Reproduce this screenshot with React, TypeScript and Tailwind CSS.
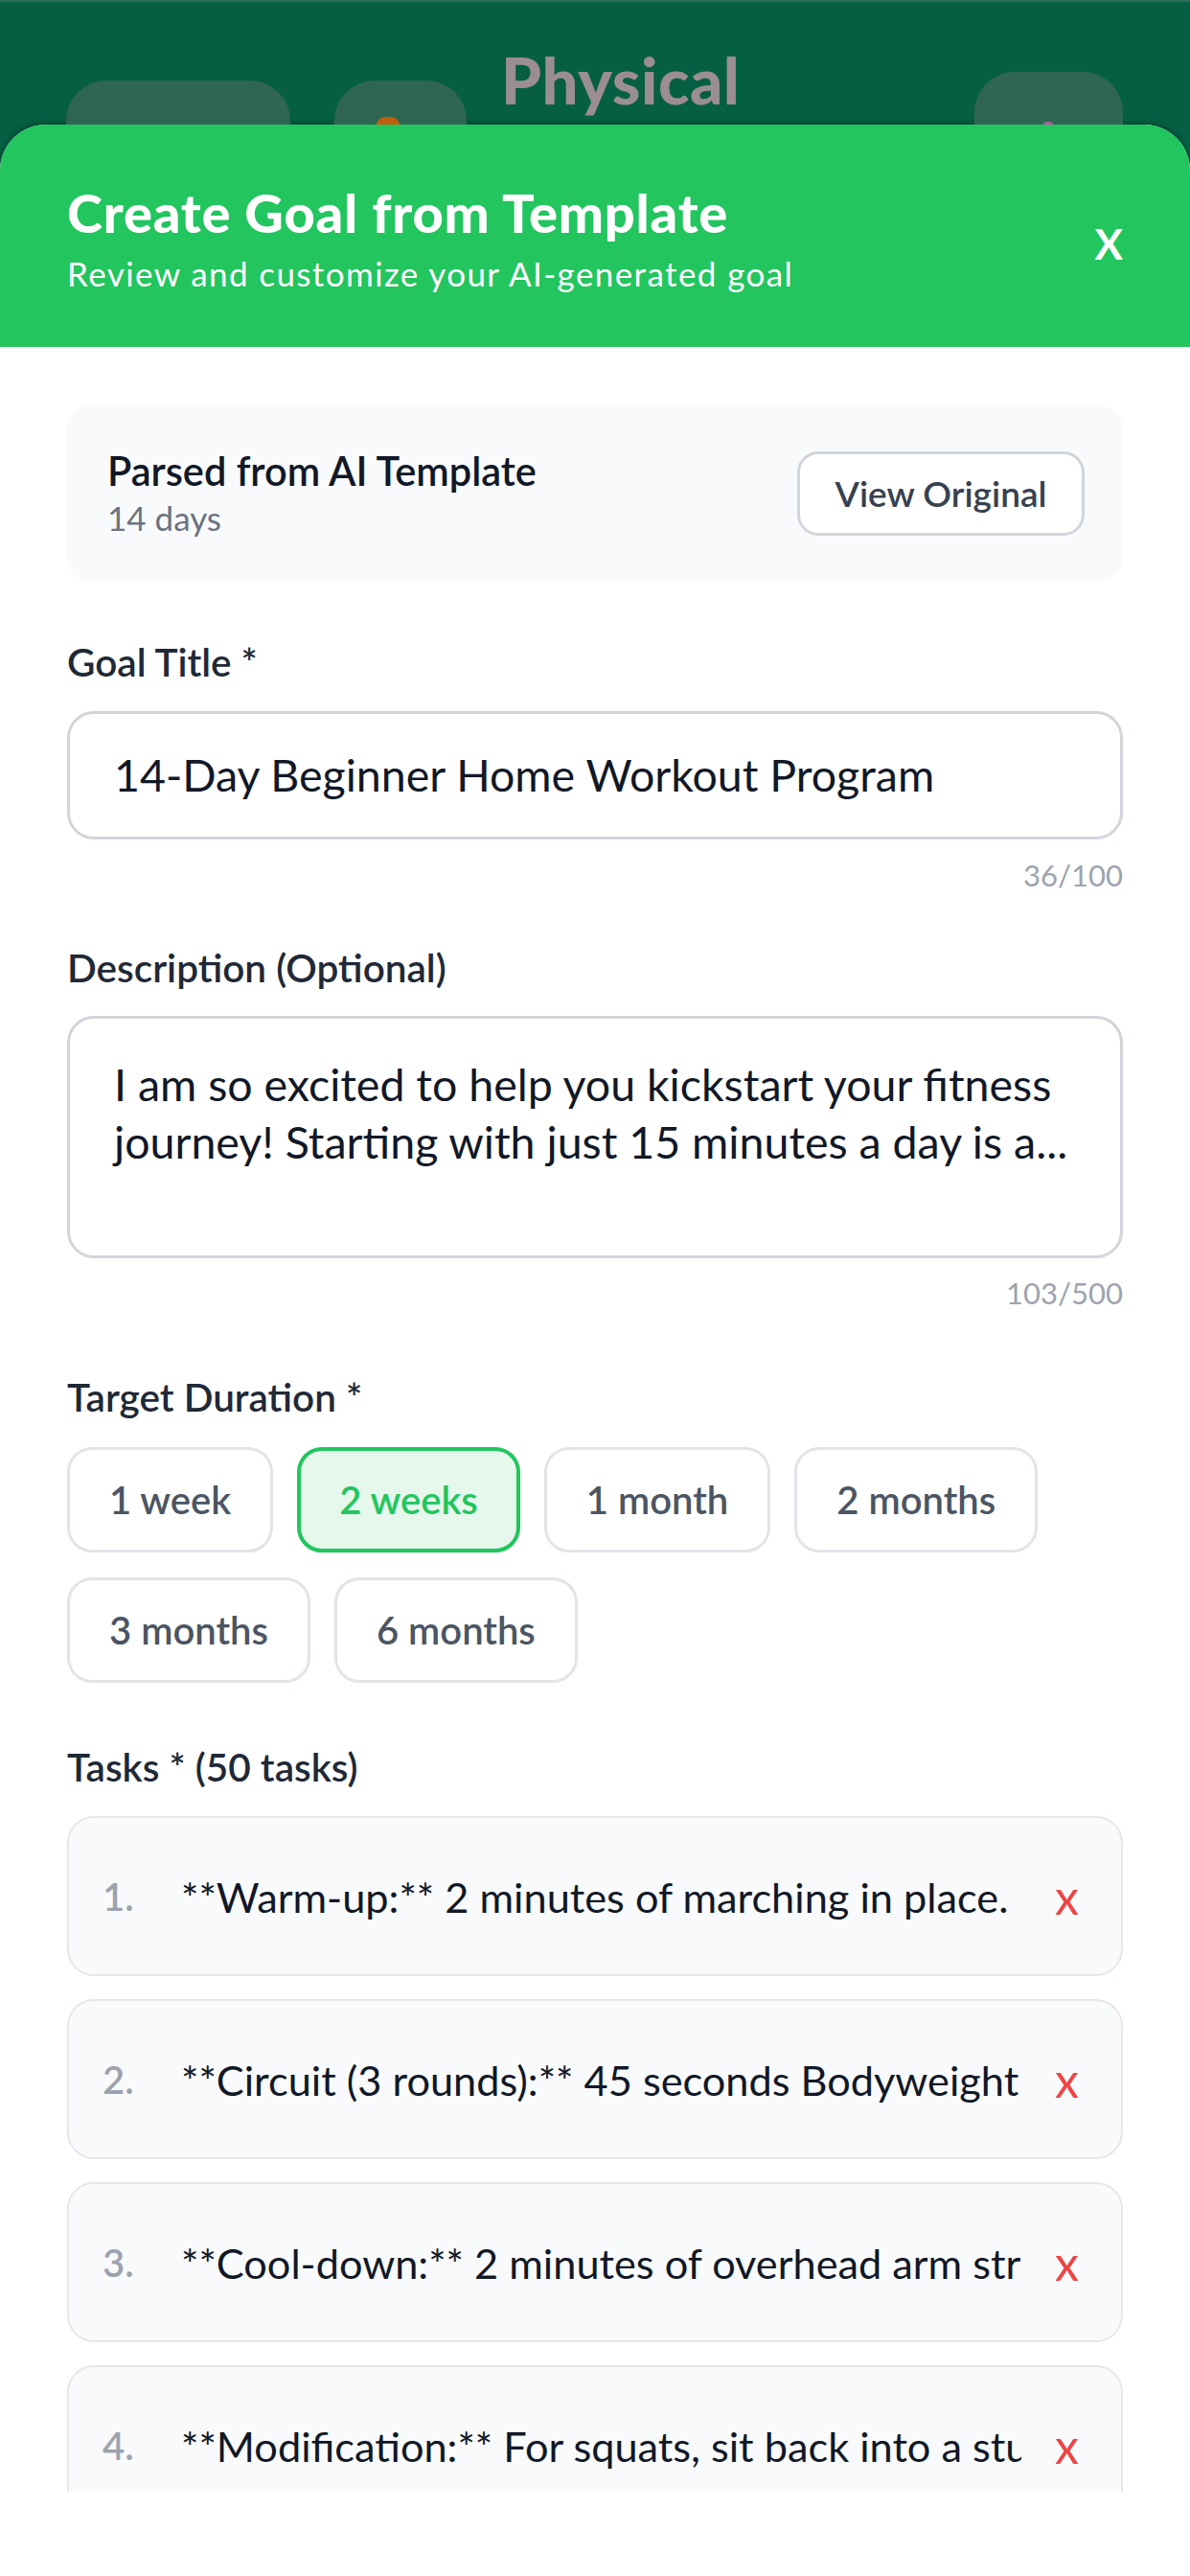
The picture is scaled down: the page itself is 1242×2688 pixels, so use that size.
import React from "react";

const durations = ["1 week", "2 weeks", "1 month", "2 months", "3 months", "6 months"];

const tasks = [
  "**Warm-up:** 2 minutes of marching in place.",
  "**Circuit (3 rounds):** 45 seconds Bodyweight Squats, 15 seconds rest",
  "**Cool-down:** 2 minutes of overhead arm stretches and shoulder rolls",
  "**Modification:** For squats, sit back into a sturdy chair and stand up",
];

function FieldLabel({ children, className = "" }: { children: React.ReactNode; className?: string }) {
  return (
    <div className={`text-[40.5px] leading-[48px] font-semibold text-[#1f2937] ${className}`}>{children}</div>
  );
}

function Counter({ children, className = "" }: { children: React.ReactNode; className?: string }) {
  return <div className={`text-right text-[31px] leading-[40px] text-[#9ca3af] ${className}`}>{children}</div>;
}

export default function App() {
  const selected = "2 weeks";
  return (
    <div className="min-h-screen w-[1242px] bg-[#065f42] font-['Lato',sans-serif]">
      {/* screen underneath the sheet */}
      <div className="flex h-[130px] items-start overflow-hidden border-t-2 border-[#2c6c56]">
        <div className="ml-[69px] mt-[82px] h-[120px] w-[234px] shrink-0 rounded-[42px] bg-[#2f6652]" />
        <div className="ml-[46px] mt-[82px] flex h-[120px] w-[138px] shrink-0 rounded-[42px] bg-[#2f6652]">
          <div className="ml-[43px] mt-[38px] h-[22px] w-[26px] rounded-full bg-[#c0600c]" />
        </div>
        <div className="ml-[36px] mt-[48px] text-[67px] leading-[66px] font-black tracking-[0.6px] text-[#9b8e93]">
          Physical
        </div>
        <div className="ml-auto mr-[70px] mt-[73px] flex h-[120px] w-[155px] shrink-0 rounded-[42px] bg-[#2f6652]">
          <div className="ml-[71px] mt-[52px] h-[10px] w-[12px] rounded-full bg-[#b05aa0]" />
        </div>
      </div>

      {/* modal sheet */}
      <div className="overflow-hidden rounded-t-[48px] bg-white shadow-[0_-2px_5px_rgba(0,0,0,0.3)]">
        <div className="flex h-[232px] items-start justify-between bg-[#22c55e] px-[70px] pt-[60px]">
          <div className="flex flex-col">
            <div className="text-[56px] leading-[64px] font-black tracking-[0.8px] text-white">
              Create Goal from Template
            </div>
            <div className="mt-[9px] text-[35px] leading-[44px] tracking-[1.4px] text-white">
              Review and customize your AI-generated goal
            </div>
          </div>
          <button className="mt-[42px] text-[44px] leading-[44px] font-bold text-white">X</button>
        </div>

        <div className="h-[2238px] overflow-hidden px-[70px] pt-[61px]">
          {/* template source card */}
          <div className="flex h-[183px] items-center justify-between rounded-[24px] bg-[#f9fafb] pl-[42px] pr-[40px]">
            <div className="flex flex-col">
              <div className="text-[41.5px] leading-[48px] font-semibold text-[#111827]">Parsed from AI Template</div>
              <div className="mt-[3px] text-[35px] leading-[44px] text-[#6b7280]">14 days</div>
            </div>
            <button className="flex h-[88px] w-[300px] items-center justify-center rounded-[22px] border-[3px] border-[#d1d5db] bg-white text-[37px] font-semibold text-[#374151]">
              View Original
            </button>
          </div>

          {/* title */}
          <FieldLabel className="mt-[61px]">Goal Title *</FieldLabel>
          <div className="mt-[27px] flex h-[134px] items-center rounded-[28px] border-[3px] border-[#d1d5db] bg-white pl-[46px] text-[46.5px] text-[#111827]">
            14-Day Beginner Home Workout Program
          </div>
          <Counter className="mt-[17px]">36/100</Counter>

          {/* description */}
          <FieldLabel className="mt-[53px]">Description (Optional)</FieldLabel>
          <div className="mt-[26px] h-[253px] rounded-[28px] border-[3px] border-[#d1d5db] bg-white px-[46px] pt-[38px] text-[46.5px] leading-[60px] text-[#111827]">
            <div className="whitespace-nowrap">I am so excited to help you kickstart your fitness</div>
            <div className="whitespace-nowrap">journey! Starting with just 15 minutes a day is a...</div>
          </div>
          <Counter className="mt-[16px]">103/500</Counter>

          {/* duration */}
          <FieldLabel className="mt-[65px]">Target Duration *</FieldLabel>
          <div className="mt-[28px] flex flex-wrap gap-x-[25px] gap-y-[26px]">
            {durations.map((d) =>
              d === selected ? (
                <div
                  key={d}
                  className="flex h-[110px] items-center rounded-[26px] border-[4px] border-[#22c55e] bg-[#e6f7ec] px-[40px] text-[40px] font-semibold text-[#22c55e]"
                >
                  {d}
                </div>
              ) : (
                <div
                  key={d}
                  className="flex h-[110px] items-center rounded-[26px] border-[3px] border-[#e1e4e8] bg-white px-[41px] text-[40px] font-semibold text-[#4b5563]"
                >
                  {d}
                </div>
              )
            )}
          </div>

          {/* tasks */}
          <FieldLabel className="mt-[64px]">Tasks * (50 tasks)</FieldLabel>
          <div className="mt-[27px] flex flex-col gap-[24px]">
            {tasks.map((t, i) => (
              <div
                key={i}
                className="flex h-[167px] shrink-0 items-center rounded-[28px] border-2 border-[#e5e7eb] bg-[#f9fafb] pl-[35px] pr-[44px]"
              >
                <div className="w-[82px] shrink-0 text-[40px] font-semibold text-[#9ca3af]">{i + 1}.</div>
                <div className="min-w-0 flex-1 overflow-hidden whitespace-nowrap text-[43.3px] leading-[56px] text-[#111827]">
                  {t}
                </div>
                <button className="ml-[35px] shrink-0 text-[50px] leading-[50px] text-[#ef4444]">x</button>
              </div>
            ))}
          </div>
        </div>
        <div className="h-[88px] bg-white" />
      </div>
    </div>
  );
}
